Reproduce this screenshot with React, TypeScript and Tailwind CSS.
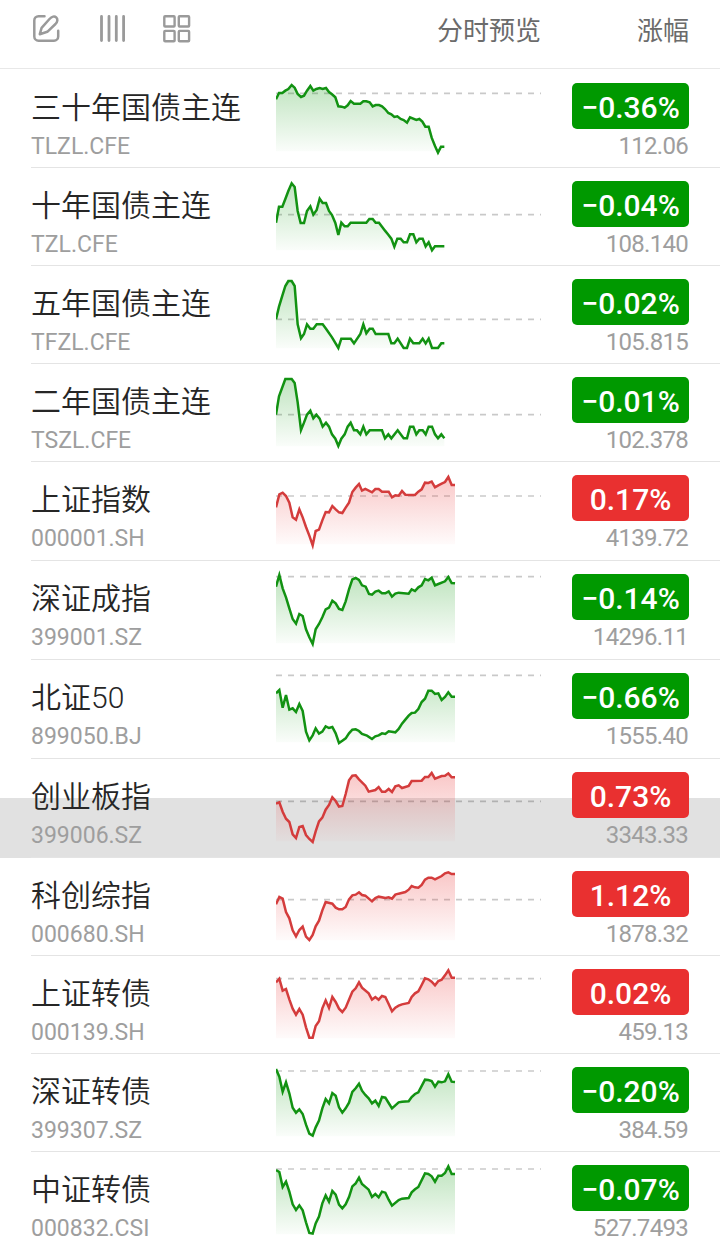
import React from 'react';

interface Quote {
  name: string;
  code: string;
  change: string;
  price: string;
  up: boolean;
  height: string;
  originY: number; // top of the row in chart units
  closeY: number; // previous close line
  points: string;
  pressed?: boolean;
}

const quotes: Quote[] = [
  {
    name: '三十年国债主连', code: 'TLZL.CFE', change: '−0.36%', price: '112.06', up: false, height: 'h-[99px]', originY: -3, closeY: 70,
    points: '33,88 42,69 52,69 61,62 70,57 80,45 89,53 98,72 108,81 117,77 126,62 136,48 145,62 154,57 164,54 173,57 183,54 192,66 201,73 211,82 220,109 230,110 239,113 248,106 257,93 267,101 286,101 295,94 304,94 314,97 323,109 332,105 342,105 351,109 360,117 370,129 379,133 388,141 397,139 407,147 416,150 426,158 435,142 454,150 463,147 472,155 481,170 491,170 500,203 510,228 519,248 528,230 538,230',
  },
  {
    name: '十年国债主连', code: 'TZL.CFE', change: '−0.04%', price: '108.140', up: false, height: 'h-[98px]', originY: 294, closeY: 434,
    points: '33,458 42,410 52,410 61,387 70,363 80,340 89,351 98,423 107,459 117,459 126,423 136,409 145,434 155,420 164,386 173,399 183,399 192,423 201,435 211,459 220,495 229,458 239,469 248,469 257,458 304,458 313,447 323,447 332,458 342,458 351,470 360,482 370,494 379,506 388,530 397,506 407,506 416,517 426,517 435,493 445,493 454,517 463,506 473,506 482,529 491,517 501,541 510,529 538,529',
  },
  {
    name: '五年国债主连', code: 'TFZL.CFE', change: '−0.02%', price: '105.815', up: false, height: 'h-[98px]', originY: 3, closeY: 163,
    points: '33,163 42,125 52,92 61,63 70,48 80,48 89,63 98,178 108,220 117,207 126,178 136,191 145,191 155,178 173,178 183,191 201,217 220,249 229,221 257,221 267,235 286,207 295,178 304,205 314,191 323,191 332,207 370,207 379,235 388,235 398,221 416,249 426,249 435,221 445,235 463,235 473,221 482,235 491,221 501,249 519,249 529,235 538,235',
  },
  {
    name: '二年国债主连', code: 'TSZL.CFE', change: '−0.01%', price: '102.378', up: false, height: 'h-[98px]', originY: 297, closeY: 449,
    points: '33,449 42,394 61,342 80,342 89,354 98,412 108,495 117,473 126,449 136,437 145,460 154,449 164,461 173,485 183,473 192,485 201,508 211,521 220,543 229,521 239,508 248,485 257,473 267,496 276,496 286,508 295,485 304,508 314,496 351,496 360,520 370,508 379,520 398,496 416,520 426,520 435,485 445,485 454,508 463,496 473,496 482,508 491,485 501,485 510,508 519,520 529,508 538,520',
  },
  {
    name: '上证指数', code: '000001.SH', change: '0.17%', price: '4139.72', up: true, height: 'h-[99px]', originY: 6, closeY: 108,
    points: '33,142 43,103 53,98 63,108 73,128 83,172 93,179 103,148 113,172 123,201 133,227 143,256 152,213 162,209 172,181 182,156 192,157 202,138 212,148 222,157 232,159 242,143 252,128 262,96 272,83 282,72 291,92 301,87 321,97 331,87 341,87 351,95 371,95 381,112 391,106 401,107 411,93 421,104 450,105 460,95 470,88 480,68 490,69 500,65 510,82 520,76 530,71 540,66 550,51 560,75 570,75',
  },
  {
    name: '深证成指', code: '399001.SZ', change: '−0.14%', price: '14296.11', up: false, height: 'h-[99px]', originY: 303, closeY: 350,
    points: '33,380 43,345 53,385 63,412 73,445 83,477 93,491 103,462 113,468 123,508 133,532 143,552 152,508 162,492 172,472 182,448 192,443 202,422 212,430 222,447 232,450 242,424 252,388 262,358 272,354 282,360 291,376 302,380 312,402 321,404 331,395 341,392 351,400 361,400 371,394 381,410 391,401 401,398 431,401 440,388 450,393 460,382 470,376 480,357 490,361 500,353 510,376 520,372 540,364 550,351 560,369 570,370',
  },
  {
    name: '北证50', code: '899050.BJ', change: '−0.66%', price: '1555.40', up: false, height: 'h-[99px]', originY: 15, closeY: 61,
    points: '33,115 43,105 53,158 63,120 73,164 83,160 93,171 103,147 113,168 123,230 133,256 143,241 152,220 162,236 172,230 182,214 192,219 202,216 212,235 222,264 232,257 242,250 252,235 262,224 272,223 282,228 291,237 306,242 321,252 331,244 341,241 351,235 361,237 371,229 391,232 401,222 411,206 421,194 431,182 440,174 450,173 460,162 470,141 480,131 490,107 500,107 510,117 520,115 530,135 540,126 550,112 560,125 570,125',
  },
  {
    name: '创业板指', code: '399006.SZ', change: '0.73%', price: '3343.33', up: true, height: 'h-[99px]', originY: 312, closeY: 439, pressed: true,
    points: '33,446 43,442 53,470 63,491 73,501 83,538 93,549 103,516 113,513 123,540 133,552 143,561 152,529 162,499 172,488 182,464 192,450 202,427 212,438 222,455 232,453 242,417 252,376 262,362 272,361 282,373 301,392 311,410 331,405 341,396 351,410 361,410 371,402 381,411 391,394 401,391 411,399 431,393 440,378 470,377 480,366 490,366 500,354 510,371 530,363 540,362 550,355 560,367 570,367',
  },
  {
    name: '科创综指', code: '000680.SH', change: '1.12%', price: '1878.32', up: true, height: 'h-[98px]', originY: 9, closeY: 134,
    points: '33,148 43,126 53,131 63,171 73,190 83,226 93,244 103,225 113,215 123,245 133,255 143,240 152,214 162,197 172,166 182,141 202,146 212,158 222,163 232,163 242,156 252,133 262,121 272,119 282,112 291,120 301,122 321,139 331,129 341,125 361,129 371,127 381,131 391,119 401,116 421,111 431,104 440,93 450,97 460,98 470,90 480,74 490,68 500,68 510,73 530,63 540,55 550,52 560,57 570,57',
  },
  {
    name: '上证转债', code: '000139.SH', change: '0.02%', price: '459.13', up: true, height: 'h-[98px]', originY: 303, closeY: 371,
    points: '33,382 43,371 53,407 63,402 73,433 83,461 93,479 103,462 113,479 123,517 133,548 143,548 152,513 162,499 172,460 182,436 192,459 202,426 212,441 222,461 232,471 242,458 262,410 272,400 282,382 291,398 311,415 321,434 331,426 341,434 351,423 361,426 371,447 381,469 391,458 401,452 411,448 431,444 440,426 450,415 460,409 470,390 480,370 490,373 500,380 510,391 520,378 530,374 540,361 550,346 560,368 570,368',
  },
  {
    name: '深证转债', code: '399307.SZ', change: '−0.20%', price: '384.59', up: false, height: 'h-[98px]', originY: 12, closeY: 63,
    points: '33,57 43,80 53,125 63,97 73,130 83,173 93,188 103,178 113,192 123,224 133,251 143,257 152,232 162,212 172,175 182,147 192,160 202,129 212,137 222,172 232,188 242,175 252,158 262,126 272,115 282,101 291,122 301,135 311,145 321,160 331,152 341,168 351,141 361,143 371,159 381,175 391,166 401,157 411,155 431,154 440,141 450,132 460,127 480,89 490,90 500,93 510,110 520,95 530,97 540,94 550,73 560,95 570,96',
  },
  {
    name: '中证转债', code: '000832.CSI', change: '−0.07%', price: '527.7493', up: false, height: 'h-[89px]', originY: 306, closeY: 357,
    points: '33,360 43,366 53,411 63,395 73,425 83,463 93,480 103,466 113,481 123,517 133,549 143,551 152,520 162,500 172,460 182,436 192,455 202,423 212,434 222,464 232,475 242,463 252,441 262,409 272,400 282,383 291,402 311,419 321,441 331,432 341,442 351,425 361,428 371,449 381,467 401,450 411,446 431,444 440,427 450,418 460,411 480,370 490,372 500,379 510,395 520,377 530,377 540,369 550,349 560,372 570,372',
  },
];

const Sparkline: React.FC<{ quote: Quote }> = ({ quote }) => {
  const { originY, closeY, points, up, code } = quote;
  const bottom = originY + 247;
  const lastX = points.split(' ').pop()!.split(',')[0];
  const gradientId = `fill-${code}`;
  const fillColor = up ? '#e93030' : '#109a10';

  return (
    <svg viewBox={`33 ${originY} 795 264`} className="w-[265px] h-[88px] shrink-0">
      <defs>
        <linearGradient id={gradientId} gradientUnits="userSpaceOnUse" x1="0" x2="0" y1={originY + 42} y2={bottom}>
          <stop offset="0" stopColor={fillColor} stopOpacity="0.27" />
          <stop offset="1" stopColor={fillColor} stopOpacity="0.02" />
        </linearGradient>
      </defs>
      <line x1="33" x2="828" y1={closeY} y2={closeY} stroke="#000" strokeOpacity="0.21" strokeWidth="5" strokeDasharray="18 18" />
      <polygon points={`33,${bottom} ${points} ${lastX},${bottom}`} fill={`url(#${gradientId})`} />
      <polyline points={points} fill="none" stroke={up ? '#d43c3c' : '#129212'} strokeWidth="7.5" strokeLinejoin="miter" />
    </svg>
  );
};

const QuoteRow: React.FC<{ quote: Quote }> = ({ quote }) => (
  <li className={`group relative flex items-start ${quote.height}`}>
    {quote.pressed && <div className="absolute inset-x-0 bottom-0 h-[60px] bg-[#e1e1e1]" />}
    <div className="relative flex items-start w-full h-full ml-[31px] pr-8 border-b border-[#e4e4e4] group-last:border-b-0">
      <div className="w-[245px] shrink-0 pt-[18px] group-first:pt-[19px]">
        <div className="text-[30px] leading-10 font-[350] text-[#262626] whitespace-nowrap">{quote.name}</div>
        <div className="mt-2 font-[Roboto] text-[23px] leading-[22px] text-[#9e9e9e]">{quote.code}</div>
      </div>
      <Sparkline quote={quote} />
      <div className="flex flex-col items-end flex-1 pt-[13px] group-first:pt-[14px] font-[Roboto]">
        <div className={`-mr-px w-[117px] h-[46px] rounded-[5px] text-center text-[30px] leading-[50px] font-medium text-white ${quote.up ? 'bg-[#e93030]' : 'bg-[#009900]'}`}>
          {quote.change}
        </div>
        <div className="mt-[5px] text-[24px] leading-6 tracking-[-0.7px] text-[#9e9e9e]">{quote.price}</div>
      </div>
    </div>
  </li>
);

export default function App() {
  return (
    <div className="w-[720px] h-[1241px] overflow-hidden bg-white font-['Roboto','Noto_Sans_CJK_SC',sans-serif]">
      <header className="flex items-start h-[69px] pl-[31px] pr-[31px] border-b border-[#e8e8e8]">
        <div className="flex items-center pt-[13px]">
          <svg width="32" height="32" viewBox="0 0 32 32" fill="none" stroke="#9a9a9a" strokeWidth="2.5" strokeLinecap="round" strokeLinejoin="round">
            <path d="M13.5 3.2H7.5A4.2 4.2 0 0 0 3.3 7.4V23.5A4.2 4.2 0 0 0 7.5 27.7H23A4.2 4.2 0 0 0 27.2 23.5V17.8" />
            <path d="M8.8 21.2 10.6 14.8 18.5 6C20.8 3.4 23.5 2.8 25.2 4.4S26.8 8.6 24.5 11L16.3 18.8Z" />
          </svg>
          <svg width="32" height="32" viewBox="0 0 32 32" className="ml-[34px]" stroke="#9a9a9a" strokeWidth="2.8" strokeLinecap="round">
            <path d="M4.5 3.5V27.5M12 3.5V27.5M19.3 3.5V27.5M26.6 3.5V27.5" />
          </svg>
          <svg width="32" height="32" viewBox="0 0 32 32" className="ml-[33px]" fill="none" stroke="#9a9a9a" strokeWidth="2.4">
            <rect x="2.3" y="3.2" width="10.3" height="10.3" rx="0.8" />
            <rect x="16.8" y="3.2" width="10.3" height="10.3" rx="0.8" />
            <rect x="2.3" y="17.9" width="10.3" height="10.3" rx="0.8" />
            <rect x="16.8" y="17.9" width="10.3" height="10.3" rx="0.8" />
          </svg>
        </div>
        <div className="flex-1 pt-[13px] pr-[96px] text-right text-[26px] leading-9 text-[#6b6b6b]">分时预览</div>
        <div className="pt-[13px] text-[26px] leading-9 text-[#6b6b6b]">涨幅</div>
      </header>
      <ul>
        {quotes.map((quote) => (
          <QuoteRow key={quote.code} quote={quote} />
        ))}
      </ul>
    </div>
  );
}
